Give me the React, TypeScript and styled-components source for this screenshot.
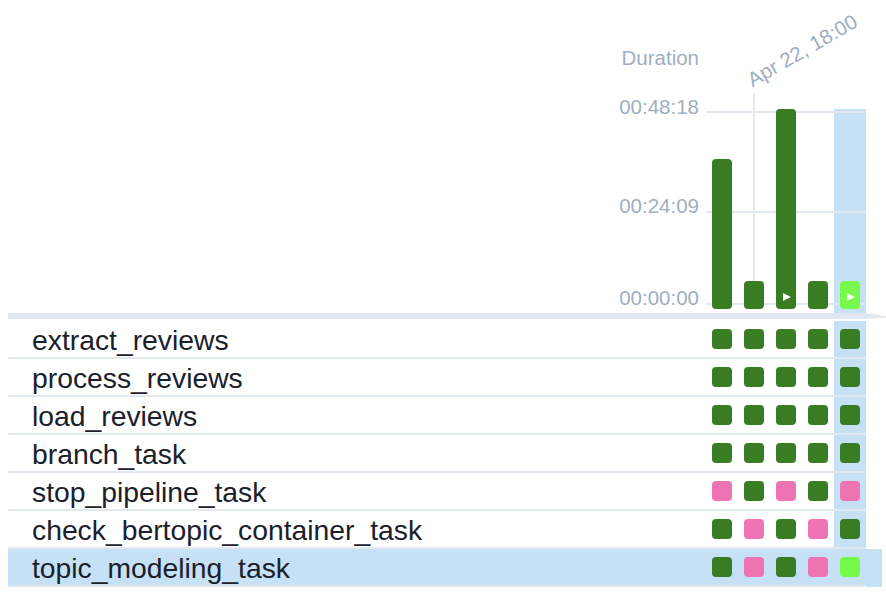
import React from "react";
import styled, { createGlobalStyle } from "styled-components";

const GREEN = "#397d22";
const PINK = "#ef73b2";
const LIME = "#77f94c";
const HL = "#c6e1f5";
const LINE = "#e2e8f0";
const AXIS = "#a0aec0";

type Status = "success" | "skipped" | "running";
const statusColor: Record<Status, string> = {
  success: GREEN,
  skipped: PINK,
  running: LIME,
};

const Global = createGlobalStyle`
  html, body { margin: 0; padding: 0; background: #fff; }
  body { font-family: "Liberation Sans", Arial, sans-serif; }
`;

const Page = styled.div`
  width: 886px;
  height: 616px;
  padding-left: 8px;
  box-sizing: border-box;
  overflow: hidden;
`;

const Grid = styled.div`
  width: 858px;
  display: flex;
  flex-direction: column;
`;

const HeaderRow = styled.div`
  display: flex;
  height: 313px;
`;

const AxisCell = styled.div`
  width: 698px;
  display: flex;
  flex-direction: column;
  align-items: flex-end;
  padding-right: 7px;
  box-sizing: border-box;
`;

const AxisLabel = styled.div<{ $mt: number }>`
  margin-top: ${(p) => p.$mt}px;
  font-size: 20.5px;
  line-height: 24px;
  color: ${AXIS};
  white-space: nowrap;
`;

const RunsHeader = styled.div`
  position: relative;
  width: 160px;
  display: flex;
  align-items: flex-end;
`;

const GridLine = styled.div<{ $top: number }>`
  position: absolute;
  left: 0;
  right: 0;
  top: ${(p) => p.$top}px;
  height: 2px;
  background: ${LINE};
  z-index: 1;
`;

const MarkerLine = styled.div`
  position: absolute;
  left: 47px;
  top: 93px;
  bottom: 4px;
  width: 2px;
  background: ${LINE};
  z-index: 1;
`;

const DateLabel = styled.div`
  position: absolute;
  left: 48px;
  top: 70px;
  font-size: 20.5px;
  line-height: 20px;
  color: ${AXIS};
  white-space: nowrap;
  transform: rotate(-30deg);
  transform-origin: 0 100%;
`;

const BarCol = styled.div<{ $hl?: boolean }>`
  width: 32px;
  height: ${(p) => (p.$hl ? "204px" : "auto")};
  display: flex;
  justify-content: center;
  align-items: flex-end;
  padding-bottom: 4px;
  box-sizing: border-box;
  background: ${(p) => (p.$hl ? HL : "transparent")};
`;

const Bar = styled.div<{ $h: number; $c: string }>`
  position: relative;
  z-index: 2;
  width: 20px;
  height: ${(p) => p.$h}px;
  background: ${(p) => p.$c};
  border-radius: 4px;
  display: flex;
  justify-content: center;
  align-items: flex-end;
`;

const PlayIcon = styled.svg`
  display: block;
  margin: 0 0 8px 2px;
`;

const Band = styled.div`
  width: 878px;
  height: 6px;
  background: ${LINE};
  clip-path: polygon(0 0, 858px 0, 878px 55%, 878px 80%, 858px 100%, 0 100%);
  margin-bottom: 2px;
`;

const TaskRow = styled.div<{ $selected?: boolean }>`
  position: relative;
  display: flex;
  height: 38px;
  box-sizing: border-box;
  border-bottom: 2px solid ${LINE};
  background: ${(p) => (p.$selected ? HL : "transparent")};
  ${(p) =>
    p.$selected
      ? `&::after {
    content: "";
    position: absolute;
    left: 100%;
    top: 0;
    bottom: -2px;
    width: 16px;
    background: ${HL};
  }`
      : ""}
`;

const NameCell = styled.div`
  width: 698px;
  padding: 2px 0 0 24px;
  box-sizing: border-box;
  display: flex;
  align-items: center;
  font-size: 28.3px;
  line-height: 34px;
  color: #1a202c;
  white-space: nowrap;
`;

const RunsCell = styled.div`
  width: 160px;
  display: flex;
`;

const StatusCell = styled.div<{ $hl?: boolean }>`
  width: 32px;
  display: flex;
  align-items: center;
  justify-content: center;
  background: ${(p) => (p.$hl ? HL : "transparent")};
`;

const Square = styled.div<{ $c: string }>`
  width: 20px;
  height: 20px;
  border-radius: 4px;
  background: ${(p) => p.$c};
`;

const S: Status = "success";
const P: Status = "skipped";
const L: Status = "running";

const tasks: { name: string; runs: Status[] }[] = [
  { name: "extract_reviews", runs: [S, S, S, S, S] },
  { name: "process_reviews", runs: [S, S, S, S, S] },
  { name: "load_reviews", runs: [S, S, S, S, S] },
  { name: "branch_task", runs: [S, S, S, S, S] },
  { name: "stop_pipeline_task", runs: [P, S, P, S, P] },
  { name: "check_bertopic_container_task", runs: [S, P, S, P, S] },
  { name: "topic_modeling_task", runs: [S, P, S, P, L] },
];

const bars: { h: number; status: Status; play?: boolean }[] = [
  { h: 150, status: S },
  { h: 28, status: S },
  { h: 200, status: S, play: true },
  { h: 28, status: S },
  { h: 28, status: L, play: true },
];

const Play = () => (
  <PlayIcon width="8" height="8" viewBox="0 0 8 8">
    <polygon points="0,0 8,4 0,8" fill="#fff" />
  </PlayIcon>
);

export default function App() {
  return (
    <>
      <Global />
      <Page>
        <Grid>
          <HeaderRow>
            <AxisCell>
              <AxisLabel $mt={46}>Duration</AxisLabel>
              <AxisLabel $mt={25}>00:48:18</AxisLabel>
              <AxisLabel $mt={75}>00:24:09</AxisLabel>
              <AxisLabel $mt={68}>00:00:00</AxisLabel>
            </AxisCell>
            <RunsHeader>
              <GridLine $top={111} />
              <GridLine $top={211} />
              <GridLine $top={303} />
              <MarkerLine />
              <DateLabel>Apr 22, 18:00</DateLabel>
              {bars.map((b, i) => (
                <BarCol key={i} $hl={i === 4}>
                  <Bar $h={b.h} $c={statusColor[b.status]}>
                    {b.play && <Play />}
                  </Bar>
                </BarCol>
              ))}
            </RunsHeader>
          </HeaderRow>
          <Band />
          {tasks.map((t, ti) => {
            const selected = ti === tasks.length - 1;
            return (
              <TaskRow key={t.name} $selected={selected}>
                <NameCell>{t.name}</NameCell>
                <RunsCell>
                  {t.runs.map((s, i) => (
                    <StatusCell key={i} $hl={i === 4 && !selected}>
                      <Square $c={statusColor[s]} />
                    </StatusCell>
                  ))}
                </RunsCell>
              </TaskRow>
            );
          })}
        </Grid>
      </Page>
    </>
  );
}
